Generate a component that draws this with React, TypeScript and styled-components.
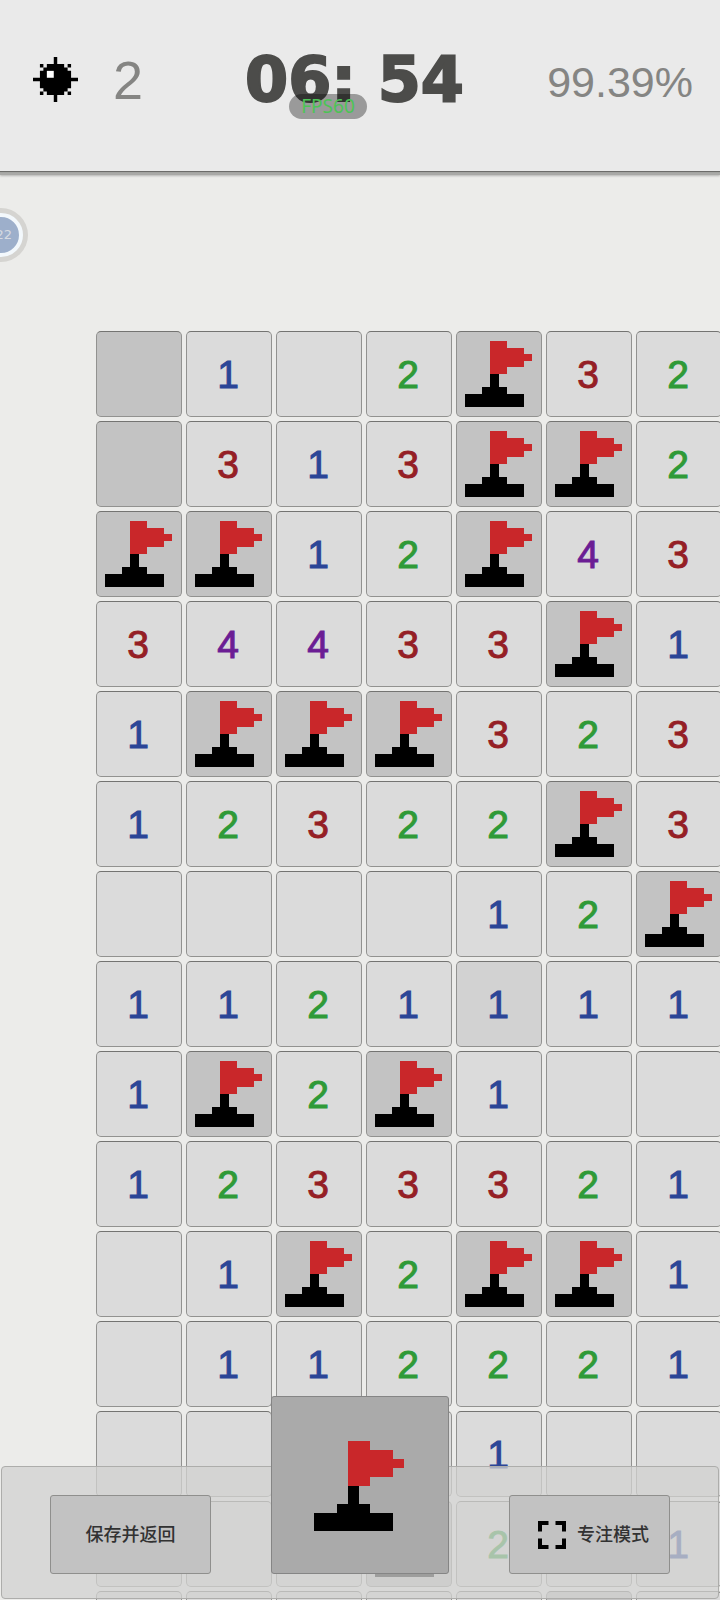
import React from "react";
import styled, { createGlobalStyle } from "styled-components";

const GlobalStyle = createGlobalStyle`
  *, *::before, *::after { box-sizing: border-box; }
  html, body { margin: 0; padding: 0; }
  body { background: #ececea; font-family: "Liberation Sans", "Noto Sans CJK SC", sans-serif; }
  button { font-family: inherit; cursor: pointer; }
`;

const Screen = styled.div`
  position: relative;
  height: 100vh;
  overflow: hidden;
  background: #ececea;
`;

const Header = styled.header`
  position: relative;
  display: grid;
  grid-template-columns: 1fr auto 1fr;
  align-items: center;
  padding: 0 27px 12px 16px;
  height: 172px;
  background: #eaeaea;
  border-bottom: 1px solid #6c6c6a;
  box-shadow: 0 1px 0 #a3a4a1, 0 3px 0 #a9a9a7, 0 4px 2px #b5b5b3;
  color: #858583;
`;

const MinesLeft = styled.div`
  display: flex;
  align-items: center;
  gap: 35px;
  padding-left: 17px;
  font-size: 54px;
  line-height: 60px;
`;

const Timer = styled.time`
  font-family: "DejaVu Sans", sans-serif;
  font-weight: 700;
  font-size: 62px;
  line-height: 60px;
  color: #4c4c4a;
  white-space: pre;
  -webkit-text-stroke: 2px #4c4c4a;
`;

const Progress = styled.div`
  padding-top: 4px;
  text-align: right;
  font-size: 43px;
  line-height: 60px;
`;

const FpsBadge = styled.div`
  position: absolute;
  top: 94px;
  left: calc(50% - 71px);
  width: 78px;
  border-radius: 13px;
  background: rgba(0, 0, 0, 0.34);
  color: #4cc455;
  font-family: "Noto Sans", sans-serif;
  font-size: 19px;
  line-height: 25px;
  text-align: center;
`;

const Bubble = styled.div`
  position: absolute;
  top: 208px;
  left: -26px;
  width: 54px;
  height: 54px;
  padding: 5px;
  border-radius: 50%;
  background: #d5d4d1;
`;

const BubbleCore = styled.div`
  height: 100%;
  padding-right: 7px;
  border: 4px solid #f3f8fc;
  border-radius: 50%;
  background: #9dafcb;
  color: #d6dbe2;
  font-family: "DejaVu Sans", sans-serif;
  font-size: 13px;
  line-height: 36px;
  text-align: right;
`;

const Board = styled.main`
  display: grid;
  grid-template-columns: repeat(7, 86px);
  grid-auto-rows: 86px;
  gap: 4px;
  padding: 159px 0 0 96px;
`;

type Kind = "open" | "covered" | "pressed";
const fills: Record<Kind, string> = { open: "#dbdbdb", covered: "#c3c3c3", pressed: "#d2d2d2" };
const inks: Record<string, string> = { "1": "#2b4597", "2": "#2f9a38", "3": "#951f26", "4": "#6b1d94" };

const Cell = styled.button<{ $kind: Kind; $ink?: string }>`
  display: flex;
  align-items: center;
  justify-content: center;
  padding: ${(p) => (p.$ink ? 2 : 0)}px 2px 0 0;
  border: 1px solid #929290;
  border-top-color: #747472;
  border-radius: 5px;
  background: ${(p) => fills[p.$kind]};
  color: ${(p) => p.$ink ?? "inherit"};
  font-size: 39px;
  line-height: 44px;
  -webkit-text-stroke: 1px currentColor;
`;

const BottomBar = styled.footer`
  position: absolute;
  left: 1px;
  right: 1px;
  bottom: 1px;
  display: flex;
  align-items: flex-end;
  justify-content: space-between;
  height: 133px;
  padding: 0 48px 24px;
  border: 1px solid #adadab;
  border-radius: 4px;
  background: rgba(210, 210, 208, 0.75);
`;

const BarButton = styled.button<{ $withIcon?: boolean }>`
  display: flex;
  align-items: center;
  justify-content: center;
  gap: 11px;
  width: 161px;
  height: 79px;
  padding: 0 0 0 ${(p) => (p.$withIcon ? 8 : 0)}px;
  border: 1px solid #8f8f8d;
  border-radius: 3px;
  background: #c2c2c2;
  color: #323232;
  font-size: 18px;
  font-weight: 500;
  line-height: 24px;
`;

const FlagButton = styled.button`
  display: flex;
  align-items: center;
  justify-content: center;
  width: 178px;
  height: 178px;
  padding: 2px 2px 0 0;
  border: 1px solid #858585;
  border-radius: 3px;
  background: #aaaaaa;
`;

function Mine() {
  return (
    <svg width="45" height="45" viewBox="0 0 13 13" aria-label="mines">
      <path d="M6 0h1v2h2v1h1v1h1v2h2v1h-2v2h-1v1h-1v1h-2v2h-1v-2h-2v-1h-1v-1h-1v-2h-2v-1h2v-2h1v-1h1v-1h2z" />
      <path d="M2 2h1v1h-1zM10 2h1v1h-1zM2 10h1v1h-1zM10 10h1v1h-1z" />
      <path d="M4 4h2v2h-2z" fill="#fff" />
    </svg>
  );
}

function Flag({ width, height }: { width: number; height: number }) {
  return (
    <svg width={width} height={height} viewBox="0 0 8 10" preserveAspectRatio="none" shapeRendering="crispEdges" aria-label="flag">
      <path d="M3 0h2v1h2v1h1v1h-1v1h-2v1h-2z" fill="#c9272a" />
      <path d="M3 5h1v2h1v1h2v2h-7v-2h2v-1h1z" fill="#000" />
    </svg>
  );
}

function FocusIcon() {
  return (
    <svg width="28" height="28" viewBox="0 0 28 28" fill="none" stroke="#000" strokeWidth="4" aria-hidden="true">
      <path d="M2 10.500V2h8.500M17.500 2H26v8.500M26 17.500v8.500h-8.500M10.500 26H2v-8.500" />
    </svg>
  );
}

/* digit: neighbour count, ".": cleared, "#": covered, "F": flagged, "*": pressed cell showing 1 */
const rows = [
  "#1.2F32",
  "#313FF2",
  "FF12F43",
  "34433F1",
  "1FFF323",
  "12322F3",
  "....12F",
  "1121*11",
  "1F2F1..",
  "1233321",
  ".1F2FF1",
  ".112221",
  "....1..",
  "...F2.1",
  ".....#.",
];

function BoardCell({ mark }: { mark: string }) {
  if (mark === "F") {
    return (
      <Cell $kind="covered">
        <Flag width={67} height={66} />
      </Cell>
    );
  }
  if (mark === "#") return <Cell $kind="covered" aria-label="covered" />;
  if (mark === ".") return <Cell $kind="open" aria-label="empty" />;
  const digit = mark === "*" ? "1" : mark;
  return (
    <Cell $kind={mark === "*" ? "pressed" : "open"} $ink={inks[digit]}>
      {digit}
    </Cell>
  );
}

export default function App() {
  return (
    <Screen>
      <GlobalStyle />
      <Header>
        <MinesLeft>
          <Mine />
          <span>2</span>
        </MinesLeft>
        <Timer>06: 54</Timer>
        <Progress>99.39%</Progress>
        <FpsBadge>FPS60</FpsBadge>
      </Header>
      <Board>
        {rows.flatMap((row, y) => [...row].map((mark, x) => <BoardCell key={`${x}-${y}`} mark={mark} />))}
      </Board>
      <Bubble>
        <BubbleCore>22</BubbleCore>
      </Bubble>
      <BottomBar>
        <BarButton>保存并返回</BarButton>
        <FlagButton>
          <Flag width={90} height={90} />
        </FlagButton>
        <BarButton $withIcon>
          <FocusIcon />
          专注模式
        </BarButton>
      </BottomBar>
    </Screen>
  );
}
